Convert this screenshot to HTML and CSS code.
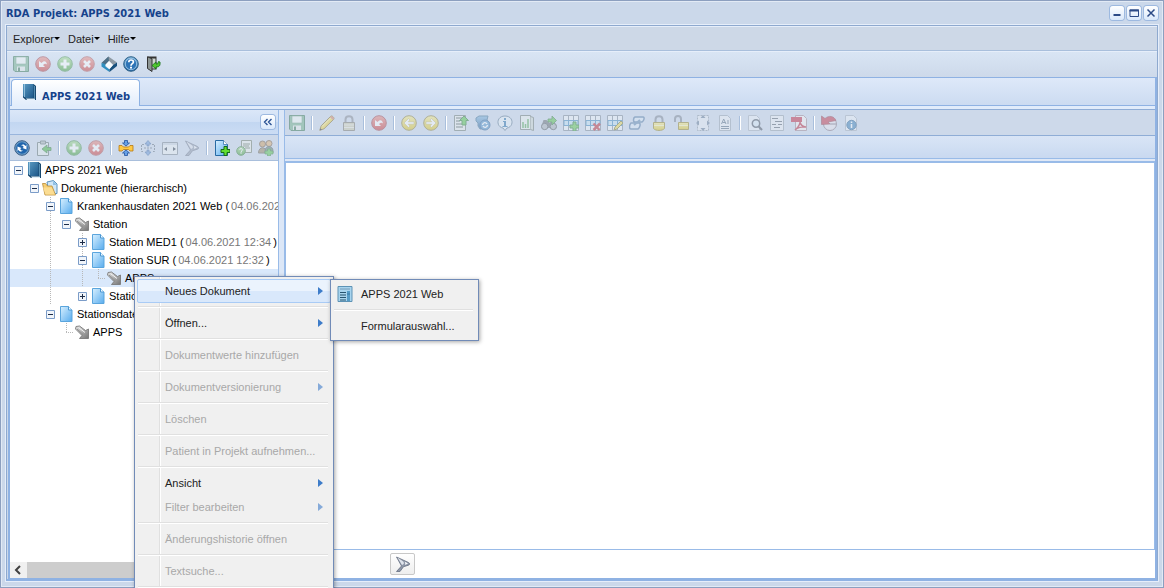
FILE: index.html
```html
<!DOCTYPE html>
<html lang="de">
<head>
<meta charset="utf-8">
<title>RDA Projekt: APPS 2021 Web</title>
<link rel="stylesheet" href="styles.css">
</head>
<body>
<svg class="sprite" aria-hidden="true">
  <defs>
    <linearGradient id="g-doc" x1="0" y1="0" x2="1" y2="1"><stop offset="0" stop-color="#d8f0ff"/><stop offset="1" stop-color="#58acee"/></linearGradient>
    <linearGradient id="g-blue" x1="0" y1="0" x2="0" y2="1"><stop offset="0" stop-color="#7db4dc"/><stop offset="1" stop-color="#1d5e9c"/></linearGradient>
    <linearGradient id="g-green" x1="0" y1="0" x2="0" y2="1"><stop offset="0" stop-color="#a5dc8c"/><stop offset="1" stop-color="#3a9a30"/></linearGradient>
    <linearGradient id="g-red" x1="0" y1="0" x2="0" y2="1"><stop offset="0" stop-color="#ee8d80"/><stop offset="1" stop-color="#c93030"/></linearGradient>
    <linearGradient id="g-yel" x1="0" y1="0" x2="0" y2="1"><stop offset="0" stop-color="#fbef8a"/><stop offset="1" stop-color="#dcc21a"/></linearGradient>
    <linearGradient id="g-grey" x1="0" y1="0" x2="1" y2="1"><stop offset="0" stop-color="#e4e4e4"/><stop offset="1" stop-color="#757575"/></linearGradient>
    <linearGradient id="g-book" x1="0" y1="0" x2="1" y2="1"><stop offset="0" stop-color="#5c9cc4"/><stop offset="1" stop-color="#1b5688"/></linearGradient>
  </defs>
  <symbol id="save" viewBox="0 0 16 16"><path d="M.5.5h15v15H2L.5 14z" fill="#6fae86" stroke="#31704c"/><path d="M3 1h10v7H3z" fill="#f2f8f4" stroke="#5a9070" stroke-width=".6"/><path d="M4 10.500h8V15H4z" fill="#e6ece8"/><path d="M5 11.500h2V15H5z" fill="#31704c"/></symbol>
  <symbol id="undo" viewBox="0 0 16 16"><circle cx="8" cy="8" r="7.300" fill="url(#g-red)" stroke="#a04048"/><path d="M4 5v6h6L8 9c2-2 3-1.500 4-.5C11.500 5 9 4 6.500 7z" fill="#fff"/></symbol>
  <symbol id="add" viewBox="0 0 16 16"><circle cx="8" cy="8" r="7.300" fill="url(#g-green)" stroke="#4c9450"/><path d="M8 3.500v9M3.500 8h9" stroke="#fff" stroke-width="3"/></symbol>
  <symbol id="del" viewBox="0 0 16 16"><circle cx="8" cy="8" r="7.300" fill="url(#g-red)" stroke="#b05858"/><path d="M5 5l6 6M11 5l-6 6" stroke="#fff" stroke-width="2.600"/></symbol>
  <symbol id="cube" viewBox="0 0 16 16"><path d="M7.500.5L16 6.500 12 9 8 5 4.500 9 .5 7z" fill="#8f9ba5"/><path d="M7.500.5L.5 7l4 2L8 5z" fill="#4d6f86"/><path d="M.5 7l4 1v2.500l4 3V16L.5 10.500z" fill="#2f8fc0"/><path d="M16 6.500V10l-7.500 6v-3L12 9z" fill="#174f7c"/><path d="M8 5l4 4-3.500 4-4-3.500V8.500z" fill="#f7fbfd"/></symbol>
  <symbol id="help" viewBox="0 0 16 16"><circle cx="8" cy="8" r="7.300" fill="url(#g-blue)" stroke="#30638a"/><circle cx="8" cy="8" r="5.700" fill="#2e74b6" stroke="#a9d0ec" stroke-width=".8"/><path d="M5.800 6.200c0-3 4.600-2.800 4.600-.2C10.400 7.800 8 7.600 8 9.700" fill="none" stroke="#fff" stroke-width="1.700"/><path d="M7 10.800h2v1.700H7z" fill="#fff"/></symbol>
  <symbol id="exit" viewBox="0 0 16 16"><path d="M2.500.5h9v13H7V2.500H2.500z" fill="#333"/><path d="M7 2.500h3.500v10H7z" fill="#cfd6d0"/><path d="M2.500.8l4.500 2V15.500l-4.500-3z" fill="#8e9694" stroke="#333"/><path d="M7 9.500l4-3.500v2h1.500l1-2.500 1.500.5c.5 4-1 5-4 5V13z" fill="#50c92e" stroke="#176d16" stroke-width=".8"/></symbol>
  <symbol id="book" viewBox="0 0 16 18"><path d="M3 1h9.500L15 3v14H5L2 14.500V1z" fill="#17486f"/><path d="M5 15.500h9V17H6z" fill="#dfeef7"/><path d="M2 1h10.500v14H5L2 13z" fill="url(#g-book)"/><path d="M3.500 1v13" stroke="#a0cbe4" stroke-width=".8"/><path d="M13.500 3v13" stroke="#69a3c6" stroke-width=".8"/></symbol>
  <symbol id="refresh" viewBox="0 0 16 16"><circle cx="8" cy="8" r="7.300" fill="#6a9cc8" stroke="#3b5f86"/><circle cx="8" cy="8" r="5.800" fill="#2065ac"/><path d="M3.500 11V6.500l4 1.500-1.300 1c.6 1.300 1.500 1.800 2.800 1.500-1.500 1.700-3.600 1.300-4.300-.5zM12.500 5v4.500l-4-1.500 1.300-1C9.200 5.700 8.300 5.200 7 5.500c1.500-1.700 3.600-1.300 4.300.5z" fill="#fff"/></symbol>
  <symbol id="clip" viewBox="0 0 16 16"><path d="M1.500 2.500h11v13h-11z" fill="#e6eeee" stroke="#5f716e"/><path d="M4.500 1h5v3h-5z" fill="#acb8b6" stroke="#5f716e"/><path d="M6 9l5-4v2.500h4v3h-4V13z" fill="#41b437" stroke="#23722a" stroke-width=".8"/></symbol>
  <symbol id="expand" viewBox="0 0 16 16"><path d="M1 5.500h3l1.500 1.500h5L12 5.500h3v5.500h-3l-1.500-1.500h-5L4 11H1z" fill="#ffc944" stroke="#b67813" stroke-width=".8"/><path d="M6.500.5h3v2.500h2L8 6 4.500 3h2zM6.500 15.500h3V13h2L8 10l-3.500 3h2z" fill="#67a0e6" stroke="#24549e" stroke-width=".8"/></symbol>
  <symbol id="collapse" viewBox="0 0 16 16"><path d="M4 4.500H1.500v7H4M12 4.500h2.500v7H12M4 8h8" stroke="#63717d" fill="none" stroke-dasharray="2 1"/><path d="M8 .5l3 3.500H9v2H7V4H5zM8 15.500l3-3.500H9v-2H7v2H5z" fill="#6796d4" stroke="#32609c" stroke-width=".7"/></symbol>
  <symbol id="fit" viewBox="0 0 16 16"><path d="M.5 2.500h15v12H.5z" fill="#eef2f5" stroke="#78838f"/><path d="M1 3h14v2H1z" fill="#ccd5df"/><path d="M2 9l3-2v4zM14 9l-3-2v4z" fill="#293542"/></symbol>
  <symbol id="filter" viewBox="0 0 16 16"><path d="M1.500 1l12 5.500c1.500.8 1.500 2.200 0 2.700l-5 1.500L5 15.500H1.500L6.500 10z" fill="#8e97a8" stroke="#666f81" stroke-width=".8"/><path d="M2.500 1.500l5 3.500c1.500 1 2 2.500.5 3.500l-1 .5z" fill="#dfe4ec"/><path d="M9.500 5.500l3.500 2-3 1.500c.5-1 .3-2.500-.5-3.500z" fill="#f6f8fb"/></symbol>
  <symbol id="docadd" viewBox="0 0 16 16"><path d="M1.500.500h8l4 4v11h-12z" fill="url(#g-doc)" stroke="#286ba4"/><path d="M9.500.5v4h4" fill="#fff" stroke="#286ba4" stroke-width=".7"/><path d="M10 6.500h3v3h3v3h-3v3h-3v-3H7v-3h3z" fill="#62df31" stroke="#176d16"/></symbol>
  <symbol id="docq" viewBox="0 0 16 16"><path d="M5.500.5h10v12h-10z" fill="#eef0e8" stroke="#707b66"/><path d="M7 4h7M7 6h6M9 8h5" stroke="#60705a"/><circle cx="5" cy="11" r="4.300" fill="url(#g-green)" stroke="#3b803b"/><path d="M3.700 9.800c0-1.800 2.700-1.700 2.700 0C6.400 11 5 11 5 12.200M4.300 13h1.500" fill="none" stroke="#fff"/></symbol>
  <symbol id="users" viewBox="0 0 16 16"><circle cx="4.500" cy="4" r="3" fill="#cf9f5e" stroke="#765d42"/><circle cx="11" cy="3.500" r="3" fill="#e2b171" stroke="#765d42"/><path d="M.5 13c0-7 8-7 8 0z" fill="#98855c" stroke="#655f51"/><path d="M7 11c0-6 8-6 8 0v2H7z" fill="#667c70" stroke="#4c6155"/><path d="M9.500 9h3v2h2.500v3h-2.500v2h-3v-2H7v-3h2.500z" fill="#58c548" stroke="#267a27" stroke-width=".7"/></symbol>
  <symbol id="pencil" viewBox="0 0 16 16"><path d="M.8 15.300l1.400-4.500L11.700 1.300c1.200-1.200 4.200 1.500 3 3L5 13.800z" fill="#f1d544" stroke="#806a23"/><path d="M11 2l3 3 1-2-2.300-2z" fill="#d77b68"/><path d="M3 11.500l8.500-8.500" stroke="#fff8ae"/><path d="M.8 15.300l.6-2 1.600 1.400z" fill="#222"/></symbol>
  <symbol id="lock" viewBox="0 0 16 16"><path d="M4.500 8V4.500c0-4.500 7-4.500 7 0V8" fill="none" stroke="#848991" stroke-width="2"/><path d="M2.500 7.500h11v8h-11z" fill="#c9c8a9" stroke="#777569"/><path d="M3 10h10M3 12.500h10" stroke="#e9e8dc"/></symbol>
  <symbol id="lockgold" viewBox="0 0 16 16"><path d="M4.500 8V4.500c0-4.500 7-4.500 7 0V8" fill="none" stroke="#7b8491" stroke-width="2"/><path d="M2.500 7.500h11v6c-2 2.600-9 2.600-11 0z" fill="url(#g-yel)" stroke="#92821d"/><path d="M3 10.500h10" stroke="#fff6b4"/></symbol>
  <symbol id="unlock" viewBox="0 0 16 16"><path d="M2 7V4c0-4 6-4 6 0v4" fill="none" stroke="#7b8491" stroke-width="2"/><path d="M5.500 7.500h10v7h-10z" fill="url(#g-yel)" stroke="#92821d"/><path d="M6 10.500h9" stroke="#fff6b4"/></symbol>
  <symbol id="back" viewBox="0 0 16 16"><circle cx="8" cy="8" r="7.300" fill="url(#g-yel)" stroke="#8c8038"/><path d="M3 8l4.500-4.500L9 5 7.300 6.800H13v2.400H7.300L9 11l-1.500 1.500z" fill="#fff" stroke="#a39328" stroke-width=".4"/></symbol>
  <symbol id="fwd" viewBox="0 0 16 16"><circle cx="8" cy="8" r="7.300" fill="url(#g-yel)" stroke="#8c8038"/><path d="M13 8L8.500 3.500 7 5l1.700 1.800H3v2.400h5.700L7 11l1.500 1.500z" fill="#fff" stroke="#a39328" stroke-width=".4"/></symbol>
  <symbol id="listup" viewBox="0 0 16 16"><path d="M1.500.5h11v15h-11z" fill="#edf1ee" stroke="#6c7b73"/><path d="M3 3h6M3 6h4M3 9h7M3 12h7" stroke="#7c8580" stroke-width="1.300"/><path d="M11 1l4.500 4.500H13V10H9V5.500H6.500z" fill="#55c745" stroke="#287d2d"/></symbol>
  <symbol id="sync" viewBox="0 0 16 16"><path d="M1 3l3-2h9l-1 4 2 2v4l-3 3H5l-2-3V8L1 6z" fill="url(#g-blue)" stroke="#396c91"/><circle cx="10" cy="10" r="5" fill="#4f92c7" stroke="#285e94"/><path d="M7.500 10c.5-3 3.500-3 4.500-1M12.500 10c-.5 3-3.500 3-4.500 1" stroke="#fff" fill="none" stroke-width="1.400"/></symbol>
  <symbol id="info" viewBox="0 0 16 16"><path d="M8 1c9 0 9 11 2 12l-2 2.500-2-2.500C-1 12-1 1 8 1z" fill="#e9f2f9" stroke="#57748d"/><path d="M7 3h2v2H7zM6 6h3v5h1.500v1h-5v-1H7V7H6z" fill="#256fa9"/></symbol>
  <symbol id="chart" viewBox="0 0 16 16"><path d="M1.500.5h10v14h-10z" fill="#eef2ee" stroke="#6d7871"/><path d="M11.500 1.500l3 1v13l-3-1" fill="#cfd8d0" stroke="#6d7871"/><path d="M4 7v6M6.500 9v4M9 4v9" stroke="#50a650" stroke-width="1.500"/></symbol>
  <symbol id="binoc" viewBox="0 0 16 16"><path d="M2.500 5h3l3 3 4-3 3 6v2h-15v-2z" fill="#646b70"/><circle cx="3.700" cy="11.500" r="3.200" fill="#a8b1b6" stroke="#4d5459"/><circle cx="12.300" cy="11.500" r="3.200" fill="#a8b1b6" stroke="#4d5459"/><path d="M7 4h4V1l4.500 4.500L11 10V7H7z" fill="#57c246" stroke="#27752b" stroke-width=".8"/></symbol>
  <symbol id="grid" viewBox="0 0 16 16"><path d="M.5.500h15v15H.5z" fill="#f2f6fa" stroke="#7c8894"/><path d="M5.500.5v15M10.500.5v15M.5 5.500h15M.5 10.500h15" stroke="#7c8894"/><path d="M1 5.500h14v5H1z" fill="#c4e2f4" stroke="#3b87bc"/><path d="M5.500 5v6M10.500 5v6" stroke="#3b87bc"/></symbol>
  <symbol id="gridadd" viewBox="0 0 16 16"><use href="#grid" width="16" height="16"/><path d="M10 7h3v3h3v3h-3v3h-3v-3H7v-3h3z" fill="#60c84b" stroke="#287d2d"/></symbol>
  <symbol id="griddel" viewBox="0 0 16 16"><use href="#grid" width="16" height="16"/><path d="M8.500 8.500l6 6.500M15 8.500L8.500 15" stroke="#bd2830" stroke-width="2.500"/></symbol>
  <symbol id="gridedit" viewBox="0 0 16 16"><use href="#grid" width="16" height="16"/><path d="M7 15l1-3 6-6 2 2-6 6z" fill="#edda52" stroke="#7d7a25"/></symbol>
  <symbol id="link" viewBox="0 0 16 16"><path d="M6 2h8c2 0 1 4-1 5H6c-2 0-2-4 0-5z" fill="#dbe9f6" stroke="#527aa2" stroke-width="1.500"/><path d="M2 8h8c2 0 1 5-1 6H2c-2 0-2-4 0-6z" fill="#dbe9f6" stroke="#527aa2" stroke-width="1.500"/><path d="M5 10l6-5" stroke="#5d87ad" stroke-width="2"/></symbol>
  <symbol id="resize" viewBox="0 0 16 16"><path d="M2.500.5h11v15h-11z" fill="#e8eef3" stroke="#8795a3" stroke-dasharray="2 1"/><path d="M8 0l2.500 3h-5zM8 16l2.500-3h-5zM1 8l3-2.500v5zM15 8l-3-2.500v5z" fill="#657c95"/></symbol>
  <symbol id="docA" viewBox="0 0 16 16"><path d="M2.500.500h8l3 3v12h-11z" fill="#f0f3f6" stroke="#96a3af"/><path d="M4.500 9L6.700 4 9 9M5.500 7.500h3M10 6h2M10 8h2M4 11.500h8M4 13.500h8" stroke="#52697e" fill="none"/></symbol>
  <symbol id="docfind" viewBox="0 0 16 16"><path d="M1.500.5h8l3 3v12h-11z" fill="#eef3f8" stroke="#a4afbb"/><circle cx="9" cy="8.500" r="3.700" fill="#dcebf6" stroke="#454f5c" stroke-width="1.500"/><path d="M11.700 11.500L15 15" stroke="#454f5c" stroke-width="2"/></symbol>
  <symbol id="doclist" viewBox="0 0 16 16"><path d="M1.500.500h13v15h-13z" fill="#f0f3f6" stroke="#94a0ac"/><path d="M3 3.500h6M6 6.500h7M3 9.500h4M9 9.500h4M5 12.500h6" stroke="#555e69" stroke-width="1.200"/></symbol>
  <symbol id="pdf" viewBox="0 0 16 16"><path d="M4.500.5h8l3 3v12h-11z" fill="#f8f4f5" stroke="#a08892"/><path d="M0 2h11v5H0z" fill="#c3263c"/><path d="M4 15c4-3 6-8 4.500-9 1 4 3 6 6.500 6-4-1-9 1-11 3z" fill="none" stroke="#bb2538" stroke-width="1.500"/></symbol>
  <symbol id="revert" viewBox="0 0 16 16"><circle cx="9" cy="9" r="6.500" fill="#e8e6ed" stroke="#80717f"/><path d="M9 9h6" stroke="#6d6070"/><path d="M.5 1v8.500L9 9 7 7l8-1.500C13 1 8 0 4 3.500z" fill="#c43245" stroke="#8a293a" stroke-width=".7"/></symbol>
  <symbol id="docinfo" viewBox="0 0 16 16"><path d="M2.500.5h8l3 3v12h-11z" fill="#eef3f8" stroke="#a4afbb"/><circle cx="8.500" cy="10" r="4.700" fill="#3b80b6" stroke="#255e8f"/><path d="M8.500 6.500v1.500M8.500 9v4" stroke="#fff" stroke-width="1.500"/></symbol>
  <symbol id="page" viewBox="0 0 16 16"><path d="M2.500.5h8l3.500 3.500v11.500H2.500z" fill="url(#g-doc)" stroke="#5aa5dd"/><path d="M10.500.5V4H14" fill="#eef9ff" stroke="#4c97d2"/></symbol>
  <symbol id="folder" viewBox="0 0 16 16"><path d="M5 2l6.500-1.500L15 4v9.500L7 14z" fill="#cfe6f8" stroke="#5d94bf"/><path d="M11 .8V5h4" fill="#8fc0e6"/><path d="M.5 3.500h3l2 2.500h4.500l3.500 9H3z" fill="#f6cf75" stroke="#b98a35" stroke-width=".8"/><path d="M1 7.500h8.500l3.500 7H3.500z" fill="#fbdd93"/></symbol>
  <symbol id="arrow" viewBox="0 0 16 16"><path d="M1.500 5L2 2.500l3.500-.5 6 4.500L14.500 5v9.500H5.500L8 11.500z" fill="url(#g-grey)" stroke="#7a7a7a" stroke-width=".9"/><path d="M3 5l6 5.500-2 3" fill="none" stroke="#8f8f8f"/><path d="M4.500 3.500l6.500 5" fill="none" stroke="#f5f5f5"/></symbol>
  <symbol id="form" viewBox="0 0 16 16"><path d="M1 .5h14v15H1z" fill="#a8d4ee" stroke="#5e93b5"/><path d="M3 2h10v2H3z" fill="#e9f5fc"/><path d="M3 6.500h6M3 9h6M3 11.500h6M3 14h6" stroke="#27546f"/><path d="M10 5h3v10h-3z" fill="#569cc7"/><path d="M3 3h10M10 8h3" stroke="#347ba8"/></symbol>
  <symbol id="plus" viewBox="0 0 9 9"><path d="M.5.500h8v8h-8z" fill="#f1f5fa" stroke="#7b9cc8"/><path d="M2 4.500h5M4.500 2v5" stroke="#1c2c48"/></symbol>
  <symbol id="minus" viewBox="0 0 9 9"><path d="M.5.500h8v8h-8z" fill="#f1f5fa" stroke="#7b9cc8"/><path d="M2 4.500h5" stroke="#1c2c48"/></symbol>
</svg>

<main class="window">
  <header class="titlebar">
    <h1 class="heading">RDA Projekt: APPS 2021 Web</h1>
    <div class="tools">
      <button class="tool" aria-label="Minimieren"><svg viewBox="0 0 14 14"><path d="M3.500 9h7" stroke="#2c4a86" stroke-width="2"/></svg></button>
      <button class="tool" aria-label="Maximieren"><svg viewBox="0 0 14 14"><path d="M3 4h8.500v6.500H3z" fill="none" stroke="#2c4a86"/><path d="M2.500 4.500h9.500" stroke="#2c4a86" stroke-width="2"/></svg></button>
      <button class="tool" aria-label="Schließen"><svg viewBox="0 0 14 14"><path d="M3.500 3.500l7 7M10.500 3.500l-7 7" stroke="#2c4a86" stroke-width="1.500"/></svg></button>
    </div>
  </header>

  <div class="frame">
    <nav class="menubar">
      <button class="menubtn">Explorer</button>
      <button class="menubtn">Datei</button>
      <button class="menubtn">Hilfe</button>
    </nav>
    <div class="toolbar main-tools">
      <button class="ib" disabled aria-label="Speichern"><svg><use href="#save"/></svg></button>
      <button class="ib" disabled aria-label="Rückgängig"><svg><use href="#undo"/></svg></button>
      <button class="ib" disabled aria-label="Hinzufügen"><svg><use href="#add"/></svg></button>
      <button class="ib" disabled aria-label="Entfernen"><svg><use href="#del"/></svg></button>
      <button class="ib" aria-label="Module"><svg><use href="#cube"/></svg></button>
      <button class="ib" aria-label="Hilfe"><svg><use href="#help"/></svg></button>
      <button class="ib" aria-label="Abmelden"><svg><use href="#exit"/></svg></button>
    </div>

    <div class="tabpanel">
      <div class="tabs" role="tablist">
        <button class="tab" role="tab" aria-selected="true"><svg class="book"><use href="#book"/></svg><span>APPS 2021 Web</span></button>
      </div>
      <div class="panes">
        <aside class="side">
          <div class="side-head"><button class="fold" aria-label="Einklappen"><svg viewBox="0 0 14 14"><path d="M6.500 4L3.500 7l3 3M10.500 4l-3 3 3 3" fill="none" stroke="#2c5496" stroke-width="1.400"/></svg></button></div>
          <div class="toolbar side-tools">
            <button class="ib" aria-label="Aktualisieren"><svg><use href="#refresh"/></svg></button>
            <button class="ib" disabled aria-label="Einfügen"><svg><use href="#clip"/></svg></button>
            <span class="sep"></span>
            <button class="ib" disabled aria-label="Hinzufügen"><svg><use href="#add"/></svg></button>
            <button class="ib" disabled aria-label="Löschen"><svg><use href="#del"/></svg></button>
            <span class="sep"></span>
            <button class="ib" aria-label="Aufklappen"><svg><use href="#expand"/></svg></button>
            <button class="ib" disabled aria-label="Zuklappen"><svg><use href="#collapse"/></svg></button>
            <button class="ib" disabled aria-label="Anpassen"><svg><use href="#fit"/></svg></button>
            <button class="ib" disabled aria-label="Filter"><svg><use href="#filter"/></svg></button>
            <span class="sep"></span>
            <button class="ib" aria-label="Neues Dokument"><svg><use href="#docadd"/></svg></button>
            <button class="ib" disabled aria-label="Dokument prüfen"><svg><use href="#docq"/></svg></button>
            <button class="ib" disabled aria-label="Patient aufnehmen"><svg><use href="#users"/></svg></button>
          </div>
          <ul class="tree" role="tree">
            <li class="node" role="treeitem"><i class="cell"><svg class="ec"><use href="#minus"/></svg></i><svg class="book"><use href="#book"/></svg><span class="label">APPS 2021 Web</span></li>
            <li class="node" role="treeitem"><i class="cell"></i><i class="cell"><svg class="ec"><use href="#minus"/></svg></i><svg class="ico"><use href="#folder"/></svg><span class="label">Dokumente (hierarchisch)</span></li>
            <li class="node" role="treeitem"><i class="cell"></i><i class="cell"></i><i class="cell line"><svg class="ec"><use href="#minus"/></svg></i><svg class="ico"><use href="#page"/></svg><span class="label">Krankenhausdaten 2021 Web (<em>04.06.202</em></span></li>
            <li class="node" role="treeitem"><i class="cell"></i><i class="cell"></i><i class="cell line"></i><i class="cell"><svg class="ec"><use href="#minus"/></svg></i><svg class="ico"><use href="#arrow"/></svg><span class="label">Station</span></li>
            <li class="node" role="treeitem"><i class="cell"></i><i class="cell"></i><i class="cell line"></i><i class="cell"></i><i class="cell line"><svg class="ec"><use href="#plus"/></svg></i><svg class="ico"><use href="#page"/></svg><span class="label">Station MED1 (<em>04.06.2021 12:34</em>)</span></li>
            <li class="node" role="treeitem"><i class="cell"></i><i class="cell"></i><i class="cell line"></i><i class="cell"></i><i class="cell line"><svg class="ec"><use href="#minus"/></svg></i><svg class="ico"><use href="#page"/></svg><span class="label">Station SUR (<em>04.06.2021 12:32</em>)</span></li>
            <li class="node selected" role="treeitem"><i class="cell"></i><i class="cell"></i><i class="cell line"></i><i class="cell"></i><i class="cell line"></i><i class="cell elbow"></i><svg class="ico"><use href="#arrow"/></svg><span class="label">APPS</span></li>
            <li class="node" role="treeitem"><i class="cell"></i><i class="cell"></i><i class="cell line"></i><i class="cell"></i><i class="cell"><svg class="ec"><use href="#plus"/></svg></i><svg class="ico"><use href="#page"/></svg><span class="label">Station</span></li>
            <li class="node" role="treeitem"><i class="cell"></i><i class="cell"></i><i class="cell"><svg class="ec"><use href="#minus"/></svg></i><svg class="ico"><use href="#page"/></svg><span class="label">Stationsdaten</span></li>
            <li class="node" role="treeitem"><i class="cell"></i><i class="cell"></i><i class="cell"></i><i class="cell elbow"></i><svg class="ico"><use href="#arrow"/></svg><span class="label">APPS</span></li>
          </ul>
          <div class="scroll"><button class="scroll-btn" aria-label="Nach links"><svg viewBox="0 0 16 16"><path d="M10 4L6 8l4 4" fill="none" stroke="#404040" stroke-width="2"/></svg></button><div class="thumb"></div></div>
        </aside>

        <section class="content">
          <div class="toolbar doc-tools">
            <button class="ib" disabled aria-label="Speichern"><svg><use href="#save"/></svg></button>
            <span class="sep"></span>
            <button class="ib" disabled aria-label="Bearbeiten"><svg><use href="#pencil"/></svg></button>
            <button class="ib" disabled aria-label="Sperren"><svg><use href="#lock"/></svg></button>
            <span class="sep"></span>
            <button class="ib" disabled aria-label="Rückgängig"><svg><use href="#undo"/></svg></button>
            <span class="sep"></span>
            <button class="ib" disabled aria-label="Zurück"><svg><use href="#back"/></svg></button>
            <button class="ib" disabled aria-label="Vorwärts"><svg><use href="#fwd"/></svg></button>
            <span class="sep"></span>
            <button class="ib" disabled aria-label="Hochladen"><svg><use href="#listup"/></svg></button>
            <button class="ib" disabled aria-label="Synchronisieren"><svg><use href="#sync"/></svg></button>
            <button class="ib" disabled aria-label="Information"><svg><use href="#info"/></svg></button>
            <button class="ib" disabled aria-label="Statistik"><svg><use href="#chart"/></svg></button>
            <button class="ib" disabled aria-label="Suchen"><svg><use href="#binoc"/></svg></button>
            <button class="ib" disabled aria-label="Zeile hinzufügen"><svg><use href="#gridadd"/></svg></button>
            <button class="ib" disabled aria-label="Zeile löschen"><svg><use href="#griddel"/></svg></button>
            <button class="ib" disabled aria-label="Zeile bearbeiten"><svg><use href="#gridedit"/></svg></button>
            <button class="ib" disabled aria-label="Verknüpfen"><svg><use href="#link"/></svg></button>
            <button class="ib" disabled aria-label="Abschließen"><svg><use href="#lockgold"/></svg></button>
            <button class="ib" disabled aria-label="Öffnen"><svg><use href="#unlock"/></svg></button>
            <button class="ib" disabled aria-label="Größe anpassen"><svg><use href="#resize"/></svg></button>
            <button class="ib" disabled aria-label="Text"><svg><use href="#docA"/></svg></button>
            <span class="sep"></span>
            <button class="ib" disabled aria-label="Vorschau"><svg><use href="#docfind"/></svg></button>
            <button class="ib" disabled aria-label="Liste"><svg><use href="#doclist"/></svg></button>
            <button class="ib" disabled aria-label="PDF"><svg><use href="#pdf"/></svg></button>
            <span class="sep"></span>
            <button class="ib" disabled aria-label="Historie"><svg><use href="#revert"/></svg></button>
            <button class="ib" disabled aria-label="Dokumentinfo"><svg><use href="#docinfo"/></svg></button>
          </div>
          <div class="doc-head"></div>
          <div class="doc-body"></div>
          <footer class="doc-foot"><button class="filter-btn" aria-label="Filter"><svg class="ico"><use href="#filter"/></svg></button></footer>
        </section>
      </div>
    </div>
  </div>
</main>

<div class="menu context" role="menu">
  <button class="item active arrow" role="menuitem">Neues Dokument</button>
  <hr class="rule">
  <button class="item arrow" role="menuitem">Öffnen...</button>
  <hr class="rule">
  <button class="item" role="menuitem" disabled>Dokumentwerte hinzufügen</button>
  <hr class="rule">
  <button class="item arrow" role="menuitem" disabled>Dokumentversionierung</button>
  <hr class="rule">
  <button class="item" role="menuitem" disabled>Löschen</button>
  <hr class="rule">
  <button class="item" role="menuitem" disabled>Patient in Projekt aufnehmen...</button>
  <hr class="rule">
  <button class="item arrow" role="menuitem">Ansicht</button>
  <button class="item arrow" role="menuitem" disabled>Filter bearbeiten</button>
  <hr class="rule">
  <button class="item" role="menuitem" disabled>Änderungshistorie öffnen</button>
  <hr class="rule">
  <button class="item" role="menuitem" disabled>Textsuche...</button>
  <hr class="rule">
</div>

<div class="menu submenu" role="menu">
  <button class="item" role="menuitem"><svg class="ico"><use href="#form"/></svg>APPS 2021 Web</button>
  <hr class="rule">
  <button class="item" role="menuitem">Formularauswahl...</button>
</div>
</body>
</html>
```
FILE: styles.css
```css
* { box-sizing: border-box; }

body {
  margin: 0;
  height: 100vh;
  overflow: hidden;
  position: relative;
  font-family: "Liberation Sans", Arial, sans-serif;
  font-size: 11px;
  color: #222;
}

button {
  font: inherit;
  color: inherit;
  margin: 0;
  padding: 0;
  border: 0;
  background: none;
}

svg { display: block; flex: none; }
.sprite { position: absolute; width: 0; height: 0; }
.ico { width: 16px; height: 16px; }
.book { width: 16px; height: 18px; }

.window {
  height: 100%;
  display: flex;
  flex-direction: column;
  border: 1px solid #8c9fbf;
  box-shadow: inset 0 0 0 1px #e2eaf5;
  background: #cbd8ea;
  padding: 0 5px 6px 5px;
}

.titlebar {
  height: 24px;
  flex: none;
  display: flex;
  align-items: center;
  justify-content: space-between;
}
.heading {
  margin: 0;
  font: bold 11px "DejaVu Sans Condensed", "DejaVu Sans", sans-serif;
  color: #15428b;
}
.tools { display: flex; gap: 3px; }
.tool, .fold {
  width: 14px;
  height: 14px;
  border-radius: 3px;
  background: linear-gradient(#fff, #d9e8fb);
  box-shadow: 0 0 0 1px #9db9e0;
}

.frame {
  flex: 1;
  min-height: 0;
  display: flex;
  flex-direction: column;
  border: 1px solid #8ea9cf;
  border-bottom: 2px solid #8fb2e3;
  box-shadow: 0 0 0 1px #e6eefa;
}
.menubar {
  height: 25px;
  flex: none;
  display: flex;
  align-items: center;
  gap: 8px;
  padding-left: 6px;
  background: #cdd8e7;
  border-bottom: 1px solid #a9bfdc;
  border-top: 1px solid #e6eefa;
}
.menubtn { display: flex; align-items: center; }
.menubtn::after {
  content: "";
  border: 3px solid transparent;
  border-top-color: #000;
  border-bottom: 0;
}

.toolbar {
  flex: none;
  display: flex;
  align-items: center;
  background: #cdd9ea;
}
.main-tools {
  height: 26px;
  padding: 0 0 2px 3px;
  border-top: 1px solid #e6eefa;
  background: linear-gradient(#d9e5f4, #cdd9ea);
}
.ib {
  width: 22px;
  height: 22px;
  flex: none;
  display: grid;
  place-items: center;
}
.ib svg { width: 16px; height: 16px; }
.ib:disabled svg { opacity: .45; }
.sep {
  width: 8px;
  height: 14px;
  flex: none;
  background: linear-gradient(90deg, #a9bfdc 50%, #fff 50%) center / 2px 100% no-repeat;
}

.tabpanel {
  flex: 1;
  min-height: 0;
  display: flex;
  flex-direction: column;
  border: 1px solid #8fb2e3;
  border-width: 1px 2px 1px 2px;
  margin-left: 1px;
}
.tabs {
  height: 32px;
  flex: none;
  display: flex;
  align-items: flex-start;
  padding: 1px 1px 0;
  background: linear-gradient(#8fb2e3, #8fb2e3) 0 27px / 100% 1px no-repeat,
    linear-gradient(#e1ecfb, #e1ecfb) 0 28px / 100% 3px no-repeat,
    linear-gradient(#dee9f9, #c9d9f0);
  border-bottom: 1px solid #8fadd6;
}
.tab {
  height: 27px;
  display: flex;
  align-items: center;
  gap: 5px;
  padding: 0 9px;
  border: 1px solid #8db2e3;
  border-bottom: 0;
  border-radius: 4px 4px 0 0;
  background: linear-gradient(#fff, #e1ecfb);
  font: bold 11px "DejaVu Sans Condensed", "DejaVu Sans", sans-serif;
  color: #15428b;
}
.tab .book { align-self: flex-start; margin-top: 3px; }
.tab span { padding-top: 6px; }

.panes {
  flex: 1;
  min-height: 0;
  display: flex;
  gap: 5px;
  background: #dce7f7;
}
.side {
  width: 269px;
  flex: none;
  display: flex;
  flex-direction: column;
  background: #fff;
  border-right: 1px solid #99bbe8;
}
.side-head {
  height: 25px;
  flex: none;
  display: flex;
  align-items: center;
  justify-content: flex-end;
  padding-right: 3px;
  background: linear-gradient(#dbe7f8, #cfdff5 50%, #c2d6f1 50%, #cbdcf4);
  border-bottom: 1px solid #99b5dc;
}
.side-tools { height: 26px; padding-left: 1px; border-bottom: 1px solid #a9bfdc; }
.tree {
  flex: 1;
  min-height: 0;
  overflow: hidden;
  margin: 0;
  padding: 0;
  list-style: none;
  color: #000;
}
.node {
  height: 18px;
  display: flex;
  align-items: center;
  white-space: nowrap;
}
.selected { background: #d9e8fb; }
.cell {
  width: 16px;
  height: 18px;
  flex: none;
  display: grid;
  place-items: center;
}
.ec { width: 9px; height: 9px; }
.line { background: repeating-linear-gradient(#b8b8b8 0 1px, transparent 1px 2px) center / 1px 100% no-repeat; }
.elbow {
  background:
    repeating-linear-gradient(#b8b8b8 0 1px, transparent 1px 2px) 8px 0 / 1px 9px no-repeat,
    repeating-linear-gradient(90deg, #b8b8b8 0 1px, transparent 1px 2px) 8px 9px / 8px 1px no-repeat;
}
.label { padding-left: 3px; }
.label em { font-style: normal; color: #777; margin: 0 2px; }
.scroll { height: 16px; flex: none; display: flex; background: #f0f0f0; }
.scroll-btn { width: 17px; }
.scroll-btn svg { width: 16px; height: 16px; }
.thumb { width: 180px; background: #cdcdcd; }

.content {
  flex: 1;
  min-width: 0;
  display: flex;
  flex-direction: column;
  background: #fff;
  border-left: 1px solid #99bbe8;
}
.doc-tools { height: 26px; padding-left: 1px; border-bottom: 1px solid #8fadd6; }
.doc-head {
  height: 23px;
  flex: none;
  background: linear-gradient(#d9e5f6, #c9d9f0);
  border-bottom: 1px solid #99bbe8;
}
.doc-body {
  flex: 1;
  min-height: 0;
  border: 1px solid #99bbe8;
  border-top-width: 2px;
  margin-top: 2px;
  box-shadow: 0 -2px #dfe8f6;
}
.doc-foot {
  height: 28px;
  flex: none;
  display: flex;
  align-items: center;
  padding-left: 105px;
}
.filter-btn {
  width: 25px;
  height: 22px;
  display: grid;
  place-items: center;
  border: 1px solid #c8c8c8;
  border-radius: 2px;
  background: linear-gradient(#fff, #eee);
}

.menu {
  position: absolute;
  padding: 2px;
  border: 1px solid #718bb7;
  background: #f0f0f0;
  box-shadow: 1px 1px 4px rgba(0, 0, 0, .35);
}
.context {
  left: 134px;
  top: 276px;
  width: 200px;
  background: linear-gradient(90deg, #e0e0e0 50%, #fff 50%) 24px 0 / 2px 100% no-repeat #f0f0f0;
}
.submenu { left: 330px; top: 279px; width: 149px; }
.item {
  position: relative;
  width: 100%;
  height: 24px;
  display: flex;
  align-items: center;
  padding-left: 27px;
  border: 1px solid transparent;
  border-radius: 2px;
  text-align: left;
}
.item:disabled { color: #a8a8a8; }
.item .ico { position: absolute; left: 3px; top: 3px; }
.active {
  border-color: #a9cbf5;
  background: linear-gradient(#ebf3fd 50%, #d9e8fb 50%);
}
.arrow::after {
  content: "";
  margin-left: auto;
  margin-right: 7px;
  border: 4px solid transparent;
  border-left: 5px solid #3d7cc9;
  border-right: 0;
}
.arrow:disabled::after { opacity: .6; }
.rule {
  height: 2px;
  margin: 3px 3px 3px 1px;
  border: 0;
  border-top: 1px solid #e0e0e0;
  border-bottom: 1px solid #fff;
}
```
